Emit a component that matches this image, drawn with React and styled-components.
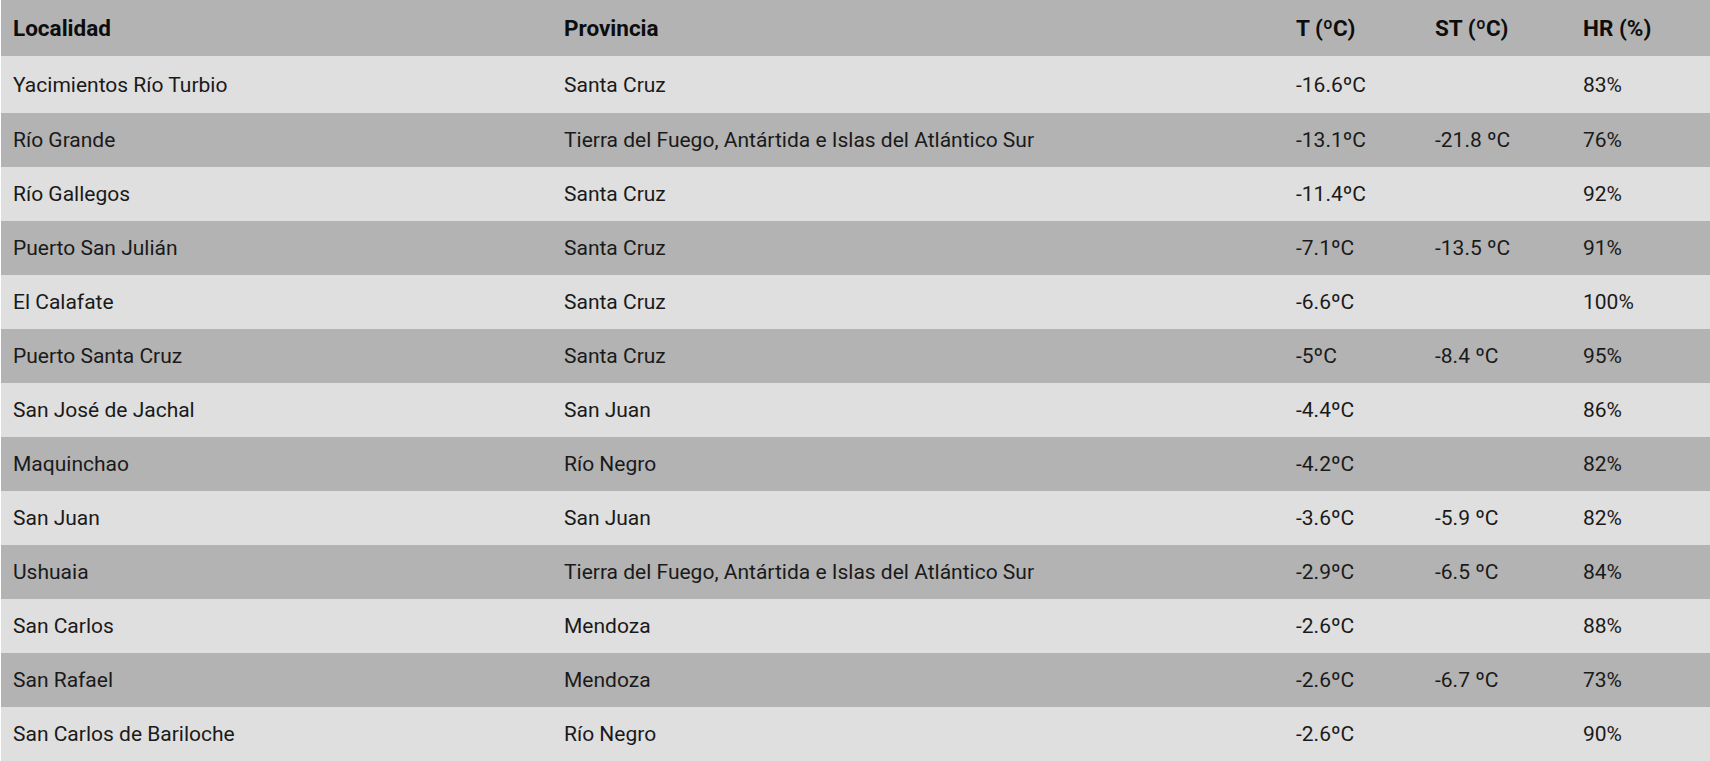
import styled, { createGlobalStyle } from 'styled-components';

const GlobalStyle = createGlobalStyle`
  html, body {
    margin: 0;
    padding: 0;
    background: #ffffff;
    overflow: hidden;
  }
`;

const Page = styled.div`
  padding-left: 1px;
  font-family: Roboto, "Liberation Sans", sans-serif;
  color: #1a1a1a;
`;

const Table = styled.table`
  width: 100%;
  border-collapse: collapse;
  table-layout: fixed;
  font-size: 21px;
`;

const HeadRow = styled.tr`
  height: 56px;
  background: #b3b3b3;
`;

const HeadCell = styled.th`
  padding: 0 12px;
  text-align: left;
  font-size: 22.5px;
  font-weight: 700;
  color: #0d0d0d;
  white-space: nowrap;
`;

const Row = styled.tr`
  height: ${({ $first }) => ($first ? '57px' : '54px')};
  background: ${({ $dark }) => ($dark ? '#b3b3b3' : '#dfdfdf')};
`;

const Cell = styled.td`
  padding: 0 12px;
  white-space: nowrap;
`;

const columns = [
  { label: 'Localidad', width: 551 },
  { label: 'Provincia', width: 732 },
  { label: 'T (ºC)', width: 139 },
  { label: 'ST (ºC)', width: 148 },
  { label: 'HR (%)', width: 139 },
];

const rows = [
  ['Yacimientos Río Turbio', 'Santa Cruz', '-16.6ºC', '', '83%'],
  ['Río Grande', 'Tierra del Fuego, Antártida e Islas del Atlántico Sur', '-13.1ºC', '-21.8 ºC', '76%'],
  ['Río Gallegos', 'Santa Cruz', '-11.4ºC', '', '92%'],
  ['Puerto San Julián', 'Santa Cruz', '-7.1ºC', '-13.5 ºC', '91%'],
  ['El Calafate', 'Santa Cruz', '-6.6ºC', '', '100%'],
  ['Puerto Santa Cruz', 'Santa Cruz', '-5ºC', '-8.4 ºC', '95%'],
  ['San José de Jachal', 'San Juan', '-4.4ºC', '', '86%'],
  ['Maquinchao', 'Río Negro', '-4.2ºC', '', '82%'],
  ['San Juan', 'San Juan', '-3.6ºC', '-5.9 ºC', '82%'],
  ['Ushuaia', 'Tierra del Fuego, Antártida e Islas del Atlántico Sur', '-2.9ºC', '-6.5 ºC', '84%'],
  ['San Carlos', 'Mendoza', '-2.6ºC', '', '88%'],
  ['San Rafael', 'Mendoza', '-2.6ºC', '-6.7 ºC', '73%'],
  ['San Carlos de Bariloche', 'Río Negro', '-2.6ºC', '', '90%'],
];

export default function App() {
  return (
    <Page>
      <GlobalStyle />
      <Table>
        <colgroup>
          {columns.map((col) => (
            <col key={col.label} style={{ width: col.width }} />
          ))}
        </colgroup>
        <thead>
          <HeadRow>
            {columns.map((col) => (
              <HeadCell key={col.label}>{col.label}</HeadCell>
            ))}
          </HeadRow>
        </thead>
        <tbody>
          {rows.map((row, i) => (
            <Row key={row[0]} $dark={i % 2 === 1} $first={i === 0}>
              {row.map((value, j) => (
                <Cell key={j}>{value}</Cell>
              ))}
            </Row>
          ))}
        </tbody>
      </Table>
    </Page>
  );
}
